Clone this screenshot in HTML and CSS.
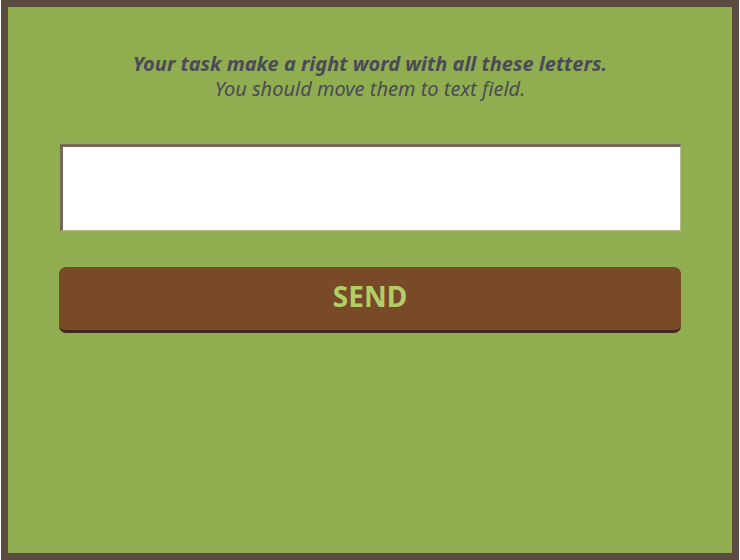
FILE: index.html
```html
<!DOCTYPE html>
<html lang="en">
<head>
<meta charset="utf-8">
<title>Word game</title>
<link rel="stylesheet" href="styles.css">
</head>
<body>
<main class="board">
<form class="task">
<label class="prompt" for="answer"><strong>Your task make a right word with all these letters.</strong><br>You should move them to text field.</label>
<input class="answer" id="answer" type="text" autocomplete="off">
<button class="send" type="button">SEND</button>
</form>
</main>
</body>
</html>
```

FILE: styles.css
```css
* {
  box-sizing: border-box;
}

body {
  margin: 0;
  background: #fff;
  font-family: "Noto Sans", sans-serif;
}

.board {
  min-height: 100vh;
  margin: 0 1px;
  padding: 44px 51px;
  border: 7px solid #5b4b41;
  background: #90ae50;
}

.task {
  display: flex;
  flex-direction: column;
}

.prompt {
  margin-bottom: 43px;
  color: #4b4a59;
  font-size: 20px;
  font-style: italic;
  line-height: 25px;
  text-align: center;
}

.answer {
  width: auto;
  height: 87px;
  margin: 0 0 36px 1px;
  padding: 0 12px;
  border: 3px solid #76675a;
  border-right: 1px solid #b4bc90;
  border-bottom: 1px solid #b4bc90;
  background: #fff;
  font: inherit;
  font-size: 28px;
}

.send {
  height: 66px;
  padding: 0 0 6px;
  border: 0;
  border-bottom: 3px solid #3f2a20;
  border-radius: 7px;
  background: #784a28;
  color: #b3ce67;
  font: bold 28px "Noto Sans", sans-serif;
}
```
